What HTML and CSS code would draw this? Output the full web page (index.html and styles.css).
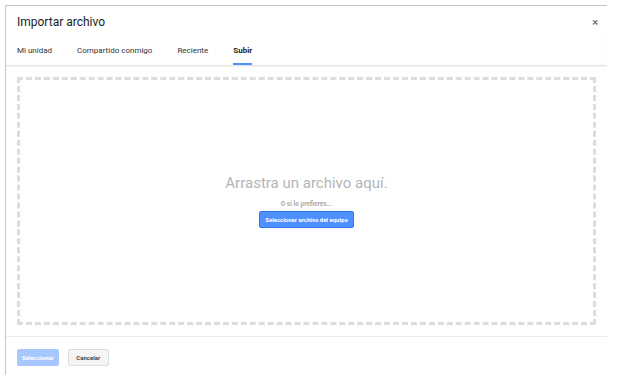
FILE: index.html
```html
<!DOCTYPE html>
<html lang="es">

<head>
  <meta charset="UTF-8">
  <title>Importar archivo</title>
  <link rel="stylesheet" href="styles.css">
</head>

<body>
  <div class="dialog">
    <div class="header">
      <h1 class="title">Importar archivo</h1>
      <span class="close">×</span>
    </div>
    <div class="tabs">
      <span class="tab">Mi unidad</span>
      <span class="tab">Compartido conmigo</span>
      <span class="tab">Reciente</span>
      <span class="tab active">Subir</span>
    </div>
    <div class="body">
      <div class="dropzone">
        <div class="drop-title">Arrastra un archivo aquí.</div>
        <div class="drop-or">O si lo prefieres...</div>
        <button class="pick">Seleccionar archivo del equipo</button>
      </div>
    </div>
    <div class="footer">
      <button class="btn primary">Seleccionar</button>
      <button class="btn">Cancelar</button>
    </div>
  </div>
</body>

</html>
```

FILE: styles.css
```css
* {
  margin: 0;
  padding: 0;
  box-sizing: border-box;
}

body {
  background: #fff;
  font-family: Roboto, 'Liberation Sans', Arial, sans-serif;
  padding: 5px 13px 0 5px;
}

.dialog {
  width: 602px;
  height: 370px;
  border-top: 1px solid #c6c6c6;
  border-left: 1px solid #c6c6c6;
  display: flex;
  flex-direction: column;
}

.header {
  display: flex;
  justify-content: space-between;
  align-items: center;
  padding: 0 9px 0 11px;
  height: 32px;
}

.title {
  font-size: 12px;
  font-weight: 400;
  color: #222;
}

.close {
  font-size: 11px;
  color: #777;
  font-weight: 700;
}

.tabs {
  display: flex;
  gap: 25px;
  padding: 0 0 0 11px;
  height: 28px;
  border-bottom: 1px solid #e3e3e3;
  box-shadow: 0 1px 1px rgba(0, 0, 0, 0.04);
}

.tab {
  font-size: 8px;
  color: #333;
  line-height: 26px;
}

.tab.active {
  font-weight: 700;
  color: #222;
  border-bottom: 2px solid #4d90fe;
}

.body {
  flex: 1;
  padding: 11px;
}

.dropzone {
  height: 100%;
  border: 3px dashed #dcdcdc;
  display: flex;
  flex-direction: column;
  align-items: center;
  justify-content: center;
}

.drop-title {
  font-size: 15px;
  color: #b5b5b5;
}

.drop-or {
  margin-top: 8px;
  font-size: 6.5px;
  font-weight: 700;
  color: #aaa;
}

.pick {
  margin-top: 3px;
  background: #4d90fe;
  color: #fff;
  border: 1px solid #3079ed;
  border-radius: 2px;
  font-family: inherit;
  font-size: 6px;
  font-weight: 700;
  padding: 4px 5px;
}

.footer {
  display: flex;
  gap: 9px;
  padding: 12px 11px 0 11px;
  height: 39px;
  border-top: 1px solid #ebebeb;
}

.btn {
  height: 17px;
  min-width: 41px;
  padding: 0 5px;
  font-family: inherit;
  font-size: 6px;
  font-weight: 700;
  color: #444;
  background: #f5f5f5;
  border: 1px solid #dcdcdc;
  border-radius: 2px;
}

.btn.primary {
  padding: 0 4px;
  background: #a6c8ff;
  border-color: #a6c8ff;
  color: #fff;
}
```
